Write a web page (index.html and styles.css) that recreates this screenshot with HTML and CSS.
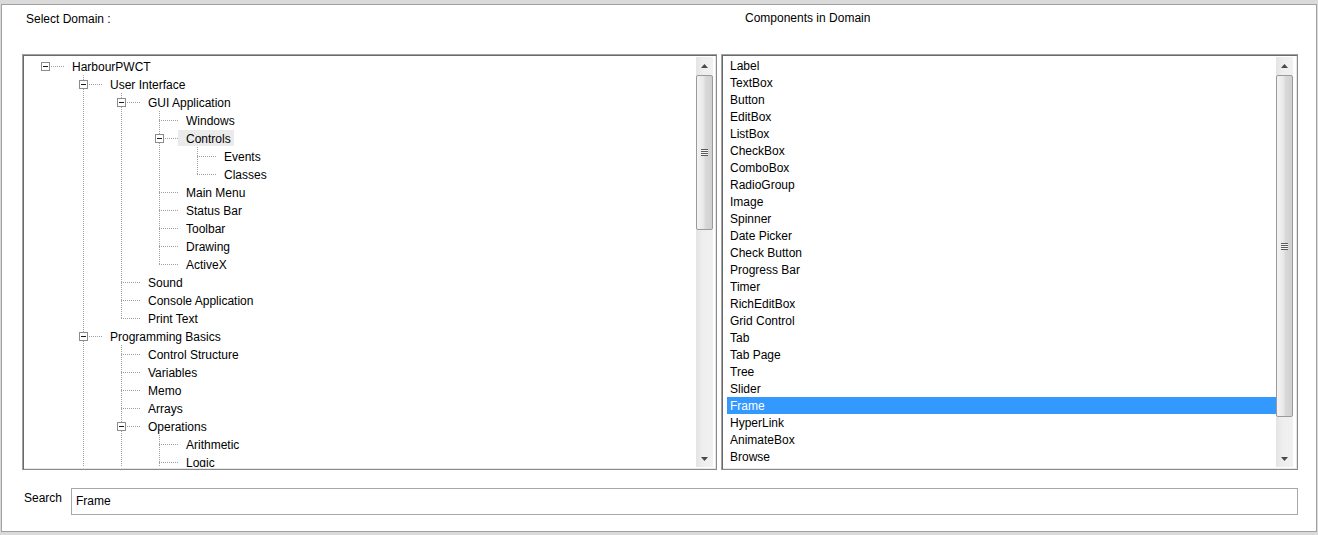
FILE: index.html
```html
<!DOCTYPE html>
<html>
<head>
<meta charset="utf-8">
<link rel="stylesheet" href="styles.css">
</head>
<body>
<div class="window">
  <div class="columns">
    <div class="col col-left">
      <div class="col-title">Select Domain :</div>
      <div class="panel">
        <div class="tree">
          <div class="row"><span class="c r"><span class="box"></span></span><span class="lbl">HarbourPWCT</span></div>
          <div class="row"><span class="c"></span><span class="c t"><span class="box"></span></span><span class="lbl">User Interface</span></div>
          <div class="row"><span class="c"></span><span class="c p"></span><span class="c t"><span class="box"></span></span><span class="lbl">GUI Application</span></div>
          <div class="row"><span class="c"></span><span class="c p"></span><span class="c p"></span><span class="c t"></span><span class="lbl">Windows</span></div>
          <div class="row"><span class="c"></span><span class="c p"></span><span class="c p"></span><span class="c t"><span class="box"></span></span><span class="lbl sel">Controls</span></div>
          <div class="row"><span class="c"></span><span class="c p"></span><span class="c p"></span><span class="c p"></span><span class="c t"></span><span class="lbl">Events</span></div>
          <div class="row"><span class="c"></span><span class="c p"></span><span class="c p"></span><span class="c p"></span><span class="c e"></span><span class="lbl">Classes</span></div>
          <div class="row"><span class="c"></span><span class="c p"></span><span class="c p"></span><span class="c t"></span><span class="lbl">Main Menu</span></div>
          <div class="row"><span class="c"></span><span class="c p"></span><span class="c p"></span><span class="c t"></span><span class="lbl">Status Bar</span></div>
          <div class="row"><span class="c"></span><span class="c p"></span><span class="c p"></span><span class="c t"></span><span class="lbl">Toolbar</span></div>
          <div class="row"><span class="c"></span><span class="c p"></span><span class="c p"></span><span class="c t"></span><span class="lbl">Drawing</span></div>
          <div class="row"><span class="c"></span><span class="c p"></span><span class="c p"></span><span class="c e"></span><span class="lbl">ActiveX</span></div>
          <div class="row"><span class="c"></span><span class="c p"></span><span class="c t"></span><span class="lbl">Sound</span></div>
          <div class="row"><span class="c"></span><span class="c p"></span><span class="c t"></span><span class="lbl">Console Application</span></div>
          <div class="row"><span class="c"></span><span class="c p"></span><span class="c e"></span><span class="lbl">Print Text</span></div>
          <div class="row"><span class="c"></span><span class="c t"><span class="box"></span></span><span class="lbl">Programming Basics</span></div>
          <div class="row"><span class="c"></span><span class="c p"></span><span class="c t"></span><span class="lbl">Control Structure</span></div>
          <div class="row"><span class="c"></span><span class="c p"></span><span class="c t"></span><span class="lbl">Variables</span></div>
          <div class="row"><span class="c"></span><span class="c p"></span><span class="c t"></span><span class="lbl">Memo</span></div>
          <div class="row"><span class="c"></span><span class="c p"></span><span class="c t"></span><span class="lbl">Arrays</span></div>
          <div class="row"><span class="c"></span><span class="c p"></span><span class="c t"><span class="box"></span></span><span class="lbl">Operations</span></div>
          <div class="row"><span class="c"></span><span class="c p"></span><span class="c p"></span><span class="c t"></span><span class="lbl">Arithmetic</span></div>
          <div class="row"><span class="c"></span><span class="c p"></span><span class="c p"></span><span class="c t"></span><span class="lbl">Logic</span></div>
        </div>
        <div class="vscroll">
          <div class="sbtn"><svg width="7" height="4" viewBox="0 0 7 4"><polygon points="0,4 3.5,0 7,4" fill="#4a4a4a"/></svg></div>
          <div class="track">
            <div class="thumb thumb-left"><span class="grip"></span></div>
          </div>
          <div class="sbtn"><svg width="7" height="4" viewBox="0 0 7 4"><polygon points="0,0 7,0 3.5,4" fill="#4a4a4a"/></svg></div>
        </div>
      </div>
    </div>
    <div class="col col-right">
      <div class="col-title">Components in Domain</div>
      <div class="panel">
        <div class="list">
          <div class="item">Label</div>
          <div class="item">TextBox</div>
          <div class="item">Button</div>
          <div class="item">EditBox</div>
          <div class="item">ListBox</div>
          <div class="item">CheckBox</div>
          <div class="item">ComboBox</div>
          <div class="item">RadioGroup</div>
          <div class="item">Image</div>
          <div class="item">Spinner</div>
          <div class="item">Date Picker</div>
          <div class="item">Check Button</div>
          <div class="item">Progress Bar</div>
          <div class="item">Timer</div>
          <div class="item">RichEditBox</div>
          <div class="item">Grid Control</div>
          <div class="item">Tab</div>
          <div class="item">Tab Page</div>
          <div class="item">Tree</div>
          <div class="item">Slider</div>
          <div class="item active">Frame</div>
          <div class="item">HyperLink</div>
          <div class="item">AnimateBox</div>
          <div class="item">Browse</div>
        </div>
        <div class="vscroll">
          <div class="sbtn"><svg width="7" height="4" viewBox="0 0 7 4"><polygon points="0,4 3.5,0 7,4" fill="#4a4a4a"/></svg></div>
          <div class="track">
            <div class="thumb thumb-right"><span class="grip"></span></div>
          </div>
          <div class="sbtn"><svg width="7" height="4" viewBox="0 0 7 4"><polygon points="0,0 7,0 3.5,4" fill="#4a4a4a"/></svg></div>
        </div>
      </div>
    </div>
  </div>
  <div class="search-row">
    <label class="search-label" for="search">Search</label>
    <input class="search-input" id="search" type="text" value="Frame">
  </div>
</div>
</body>
</html>
```
FILE: styles.css
```css
html, body {
  margin: 0;
  padding: 0;
}
body {
  background: #dadada;
  font-family: "Liberation Sans", Arial, sans-serif;
  font-size: 12px;
  color: #000;
  width: 1318px;
  height: 535px;
  overflow: hidden;
}
.window {
  margin: 4px 1px 0 1px;
  height: 528px;
  box-sizing: border-box;
  border: 1px solid #a0a0a0;
  background: #fff;
}
.columns {
  display: flex;
  gap: 4px;
  padding-left: 20px;
}
.col {
  display: flex;
  flex-direction: column;
}
.col-left { width: 695px; }
.col-right { width: 577px; }
.col-title {
  height: 49px;
  box-sizing: border-box;
  padding-top: 7px;
  line-height: 14px;
  white-space: nowrap;
}
.col-left .col-title { padding-left: 4px; }
.col-right .col-title { padding-left: 24px; padding-top: 6px; }
.panel {
  height: 416px;
  box-sizing: border-box;
  border: 1px solid #a0a0a0;
  border-right-color: #8a8a8a;
  border-bottom-color: #8a8a8a;
  padding: 2px;
  box-shadow: inset 1px 1px 0 #6a6a6a, inset -1px -1px 0 #e6e6e6;
  display: flex;
  background: #fff;
}
.tree {
  flex: 1;
  overflow: hidden;
  padding-left: 1px;
  background: #fff;
}
.row {
  display: flex;
  height: 18px;
  white-space: nowrap;
}
.c {
  flex: 0 0 38px;
  height: 18px;
  display: block;
}
.c.p {
  background: repeating-linear-gradient(to bottom, #a0a0a0 0 1px, transparent 1px 2px) 19px 0 / 1px 18px no-repeat;
}
.c.t {
  background:
    repeating-linear-gradient(to right, #a0a0a0 0 1px, transparent 1px 2px) 19px 9px / 19px 1px no-repeat,
    repeating-linear-gradient(to bottom, #a0a0a0 0 1px, transparent 1px 2px) 19px 0 / 1px 18px no-repeat;
}
.c.e {
  background:
    repeating-linear-gradient(to right, #a0a0a0 0 1px, transparent 1px 2px) 19px 9px / 19px 1px no-repeat,
    repeating-linear-gradient(to bottom, #a0a0a0 0 1px, transparent 1px 2px) 19px 0 / 1px 10px no-repeat;
}
.c.r {
  background: repeating-linear-gradient(to right, #a0a0a0 0 1px, transparent 1px 2px) 19px 9px / 19px 1px no-repeat;
}
.box {
  display: block;
  width: 9px;
  height: 9px;
  box-sizing: border-box;
  border: 1px solid #8c8c8c;
  background: #fff linear-gradient(#1a1a1a, #1a1a1a) center / 5px 1px no-repeat;
  margin: 5px 0 0 15px;
}
.lbl {
  display: block;
  height: 16px;
  line-height: 18px;
  overflow: hidden;
  margin-top: 1px;
  padding: 0 3px 0 8px;
}
.lbl.sel {
  background: #ebebeb;
}
.vscroll {
  flex: 0 0 17px;
  display: flex;
  flex-direction: column;
  background: linear-gradient(to right, #e4e4e4, #eeeeee 40%, #f1f1f1);
}
.panel .vscroll { margin-right: 1px; }
.col-right .panel .vscroll { margin-right: 2px; }
.sbtn {
  height: 17px;
  flex: 0 0 17px;
  display: flex;
  align-items: center;
  justify-content: center;
}
.sbtn svg { display: block; }
.track {
  flex: 1;
  display: flex;
  flex-direction: column;
}
.thumb {
  margin: 1px 0 0 0;
  box-sizing: border-box;
  border: 1px solid #9a9a9a;
  border-radius: 2px;
  background: linear-gradient(to right, #f4f4f4, #e7e7e7 45%, #d9d9d9 55%, #d0d0d0);
  display: flex;
  align-items: center;
  justify-content: center;
}
.thumb-left { height: 155px; }
.thumb-right { height: 342px; }
.grip {
  display: block;
  width: 7px;
  height: 7px;
  background: repeating-linear-gradient(to bottom, #5a5a5a 0 1px, #f5f5f5 1px 2px);
}
.list {
  flex: 1;
  overflow: hidden;
  padding: 0 0 0 3px;
  background: #fff;
}
.item {
  height: 17px;
  line-height: 19px;
  overflow: hidden;
  padding-left: 3px;
  white-space: nowrap;
}
.item.active {
  background: #3399ff;
  color: #fff;
}
.search-row {
  display: flex;
  align-items: flex-start;
  margin-top: 18px;
  padding-left: 22px;
}
.search-label {
  width: 47px;
  line-height: 14px;
  margin-top: 3px;
}
.search-input {
  width: 1227px;
  height: 27px;
  box-sizing: border-box;
  border: 1px solid #a8a8a8;
  padding: 0 4px 2px 4px;
  margin: 0;
  font-family: "Liberation Sans", Arial, sans-serif;
  font-size: 12px;
  color: #000;
  outline: none;
  background: #fff;
}
```
